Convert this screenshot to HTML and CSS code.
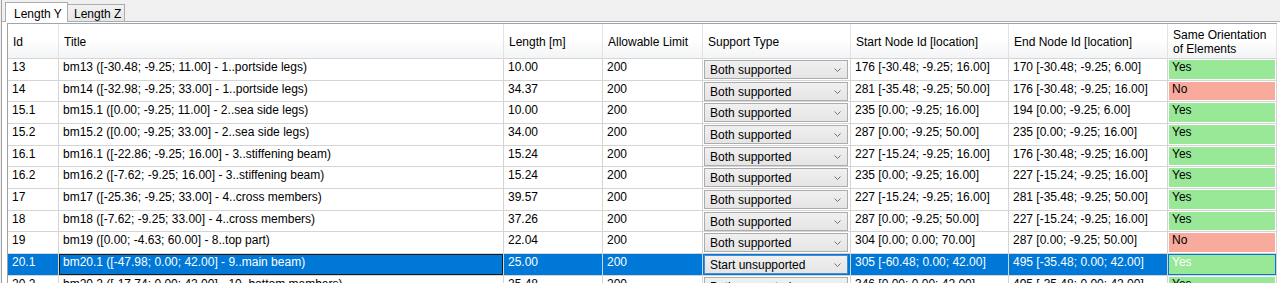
FILE: index.html
```html
<!DOCTYPE html>
<html lang="en">
<head>
  <meta charset="UTF-8">
  <title>Member lengths</title>
  <link rel="stylesheet" href="styles.css">
</head>
<body>
  <div class="frame">
    <!-- Tabs -->
    <div class="tabs">
      <div class="tab active">Length Y</div>
      <div class="tab">Length Z</div>
    </div>

    <!-- Tab page with the grid -->
    <div class="page">
      <div class="grid">
        <div class="hcell">Id</div>
        <div class="hcell">Title</div>
        <div class="hcell">Length [m]</div>
        <div class="hcell">Allowable Limit</div>
        <div class="hcell">Support Type</div>
        <div class="hcell">Start Node Id [location]</div>
        <div class="hcell">End Node Id [location]</div>
        <div class="hcell">Same Orientation<br>of Elements</div>

        <div class="row">
          <div class="cell">13</div>
          <div class="cell">bm13 ([-30.48; -9.25; 11.00] - 1..portside legs)</div>
          <div class="cell">10.00</div>
          <div class="cell">200</div>
          <div class="cell combo-cell"><div class="combo"><span>Both supported</span><svg width="7" height="4" viewBox="0 0 7 4"><polyline points="0.5,0.5 3.5,3.5 6.5,0.5"/></svg></div></div>
          <div class="cell">176 [-30.48; -9.25; 16.00]</div>
          <div class="cell">170 [-30.48; -9.25; 6.00]</div>
          <div class="cell flag-cell"><div class="flag yes">Yes</div></div>
        </div>

        <div class="row">
          <div class="cell">14</div>
          <div class="cell">bm14 ([-32.98; -9.25; 33.00] - 1..portside legs)</div>
          <div class="cell">34.37</div>
          <div class="cell">200</div>
          <div class="cell combo-cell"><div class="combo"><span>Both supported</span><svg width="7" height="4" viewBox="0 0 7 4"><polyline points="0.5,0.5 3.5,3.5 6.5,0.5"/></svg></div></div>
          <div class="cell">281 [-35.48; -9.25; 50.00]</div>
          <div class="cell">176 [-30.48; -9.25; 16.00]</div>
          <div class="cell flag-cell"><div class="flag no">No</div></div>
        </div>

        <div class="row">
          <div class="cell">15.1</div>
          <div class="cell">bm15.1 ([0.00; -9.25; 11.00] - 2..sea side legs)</div>
          <div class="cell">10.00</div>
          <div class="cell">200</div>
          <div class="cell combo-cell"><div class="combo"><span>Both supported</span><svg width="7" height="4" viewBox="0 0 7 4"><polyline points="0.5,0.5 3.5,3.5 6.5,0.5"/></svg></div></div>
          <div class="cell">235 [0.00; -9.25; 16.00]</div>
          <div class="cell">194 [0.00; -9.25; 6.00]</div>
          <div class="cell flag-cell"><div class="flag yes">Yes</div></div>
        </div>

        <div class="row">
          <div class="cell">15.2</div>
          <div class="cell">bm15.2 ([0.00; -9.25; 33.00] - 2..sea side legs)</div>
          <div class="cell">34.00</div>
          <div class="cell">200</div>
          <div class="cell combo-cell"><div class="combo"><span>Both supported</span><svg width="7" height="4" viewBox="0 0 7 4"><polyline points="0.5,0.5 3.5,3.5 6.5,0.5"/></svg></div></div>
          <div class="cell">287 [0.00; -9.25; 50.00]</div>
          <div class="cell">235 [0.00; -9.25; 16.00]</div>
          <div class="cell flag-cell"><div class="flag yes">Yes</div></div>
        </div>

        <div class="row">
          <div class="cell">16.1</div>
          <div class="cell">bm16.1 ([-22.86; -9.25; 16.00] - 3..stiffening beam)</div>
          <div class="cell">15.24</div>
          <div class="cell">200</div>
          <div class="cell combo-cell"><div class="combo"><span>Both supported</span><svg width="7" height="4" viewBox="0 0 7 4"><polyline points="0.5,0.5 3.5,3.5 6.5,0.5"/></svg></div></div>
          <div class="cell">227 [-15.24; -9.25; 16.00]</div>
          <div class="cell">176 [-30.48; -9.25; 16.00]</div>
          <div class="cell flag-cell"><div class="flag yes">Yes</div></div>
        </div>

        <div class="row">
          <div class="cell">16.2</div>
          <div class="cell">bm16.2 ([-7.62; -9.25; 16.00] - 3..stiffening beam)</div>
          <div class="cell">15.24</div>
          <div class="cell">200</div>
          <div class="cell combo-cell"><div class="combo"><span>Both supported</span><svg width="7" height="4" viewBox="0 0 7 4"><polyline points="0.5,0.5 3.5,3.5 6.5,0.5"/></svg></div></div>
          <div class="cell">235 [0.00; -9.25; 16.00]</div>
          <div class="cell">227 [-15.24; -9.25; 16.00]</div>
          <div class="cell flag-cell"><div class="flag yes">Yes</div></div>
        </div>

        <div class="row">
          <div class="cell">17</div>
          <div class="cell">bm17 ([-25.36; -9.25; 33.00] - 4..cross members)</div>
          <div class="cell">39.57</div>
          <div class="cell">200</div>
          <div class="cell combo-cell"><div class="combo"><span>Both supported</span><svg width="7" height="4" viewBox="0 0 7 4"><polyline points="0.5,0.5 3.5,3.5 6.5,0.5"/></svg></div></div>
          <div class="cell">227 [-15.24; -9.25; 16.00]</div>
          <div class="cell">281 [-35.48; -9.25; 50.00]</div>
          <div class="cell flag-cell"><div class="flag yes">Yes</div></div>
        </div>

        <div class="row">
          <div class="cell">18</div>
          <div class="cell">bm18 ([-7.62; -9.25; 33.00] - 4..cross members)</div>
          <div class="cell">37.26</div>
          <div class="cell">200</div>
          <div class="cell combo-cell"><div class="combo"><span>Both supported</span><svg width="7" height="4" viewBox="0 0 7 4"><polyline points="0.5,0.5 3.5,3.5 6.5,0.5"/></svg></div></div>
          <div class="cell">287 [0.00; -9.25; 50.00]</div>
          <div class="cell">227 [-15.24; -9.25; 16.00]</div>
          <div class="cell flag-cell"><div class="flag yes">Yes</div></div>
        </div>

        <div class="row">
          <div class="cell">19</div>
          <div class="cell">bm19 ([0.00; -4.63; 60.00] - 8..top part)</div>
          <div class="cell">22.04</div>
          <div class="cell">200</div>
          <div class="cell combo-cell"><div class="combo"><span>Both supported</span><svg width="7" height="4" viewBox="0 0 7 4"><polyline points="0.5,0.5 3.5,3.5 6.5,0.5"/></svg></div></div>
          <div class="cell">304 [0.00; 0.00; 70.00]</div>
          <div class="cell">287 [0.00; -9.25; 50.00]</div>
          <div class="cell flag-cell"><div class="flag no">No</div></div>
        </div>

        <div class="row selected">
          <div class="cell">20.1</div>
          <div class="cell focused">bm20.1 ([-47.98; 0.00; 42.00] - 9..main beam)</div>
          <div class="cell">25.00</div>
          <div class="cell">200</div>
          <div class="cell combo-cell"><div class="combo"><span>Start unsupported</span><svg width="7" height="4" viewBox="0 0 7 4"><polyline points="0.5,0.5 3.5,3.5 6.5,0.5"/></svg></div></div>
          <div class="cell">305 [-60.48; 0.00; 42.00]</div>
          <div class="cell">495 [-35.48; 0.00; 42.00]</div>
          <div class="cell flag-cell"><div class="flag yes">Yes</div></div>
        </div>

        <div class="row">
          <div class="cell">20.2</div>
          <div class="cell">bm20.2 ([-17.74; 0.00; 42.00] - 10..bottom members)</div>
          <div class="cell">25.48</div>
          <div class="cell">200</div>
          <div class="cell combo-cell"><div class="combo"><span>Both supported</span><svg width="7" height="4" viewBox="0 0 7 4"><polyline points="0.5,0.5 3.5,3.5 6.5,0.5"/></svg></div></div>
          <div class="cell">346 [0.00; 0.00; 42.00]</div>
          <div class="cell">495 [-35.48; 0.00; 42.00]</div>
          <div class="cell flag-cell"><div class="flag yes">Yes</div></div>
        </div>
      </div>
    </div>
  </div>
</body>
</html>
```

FILE: styles.css
```css
* {
  box-sizing: border-box;
}

body {
  margin: 0;
  height: 283px;
  overflow: hidden;
  background-color: #f0f0f0;
  font-family: "Liberation Sans", Arial, sans-serif;
  font-size: 12px;
  color: #000;
}

.frame {
  margin-left: 1px;
  height: 283px;
  overflow: hidden;
  border-left: 1px solid #a0a0a0;
}

/* Tabs */
.tabs {
  display: flex;
  align-items: flex-end;
  height: 21px;
  padding-left: 3px;
}

.tab {
  height: 17px;
  width: 57px;
  padding: 2px 0 0 6px;
  border: 1px solid #acacac;
  border-bottom: none;
  border-left: none;
  background: linear-gradient(#f2f2f2, #e6e6e6);
  line-height: 14px;
}

.tab.active {
  height: 20px;
  width: 63px;
  margin-bottom: -1px;
  padding: 4px 0 0 8px;
  border-left: 1px solid #acacac;
  background: #fff;
  position: relative;
  z-index: 1;
}

/* Tab page */
.page {
  height: 262px;
  background-color: #fff;
  border-top: 1px solid #acacac;
  padding: 1px 0 0 5px;
}

.grid {
  display: grid;
  grid-template-columns: 51px 445px 99px 100px 148px 158px 159px 109px;
  grid-template-rows: 35px;
  grid-auto-rows: 21.67px;
  width: 1270px;
  border-left: 1px solid #a0a0a0;
  border-top: 1px solid #9aa6b4;
}

.row {
  display: contents;
}

.hcell {
  display: flex;
  align-items: center;
  padding: 2px 0 0 5px;
  border-right: 1px solid #e3e3e3;
  border-bottom: 1px solid #d5d5d5;
  background: linear-gradient(#fff 45%, #f3f4f6);
  line-height: 14px;
  white-space: nowrap;
}

.hcell:last-child {
  border-right-color: #d5d5d5;
}

.cell {
  padding: 1px 4px 0;
  border-right: 1px solid #d5d5d5;
  border-bottom: 1px solid #d5d5d5;
  line-height: 14px;
  white-space: nowrap;
  overflow: hidden;
  background-color: #fff;
}

.selected .cell {
  background-color: #0078d7;
  color: #fff;
}

.selected .focused {
  box-shadow: inset 0 0 0 1px #1a1a1a;
}

/* Combo box cells */
.combo-cell {
  padding: 1px 2px 0 1px;
}

.combo {
  display: flex;
  align-items: center;
  justify-content: space-between;
  height: 19px;
  padding: 1px 6px 0 5px;
  border: 1px solid #acacac;
  background: linear-gradient(#f0f0f0, #e5e5e5);
  color: #000;
}

.combo svg polyline {
  fill: none;
  stroke: #707070;
  stroke-width: 1;
}

.selected .combo {
  border-color: #4a8ccc;
}

/* Yes / No cells */
.flag-cell {
  padding: 1px;
}

.flag {
  height: 100%;
  padding: 0 3px;
}

.flag.yes {
  background-color: #98e898;
}

.flag.no {
  background-color: #f8aa9c;
}
```
